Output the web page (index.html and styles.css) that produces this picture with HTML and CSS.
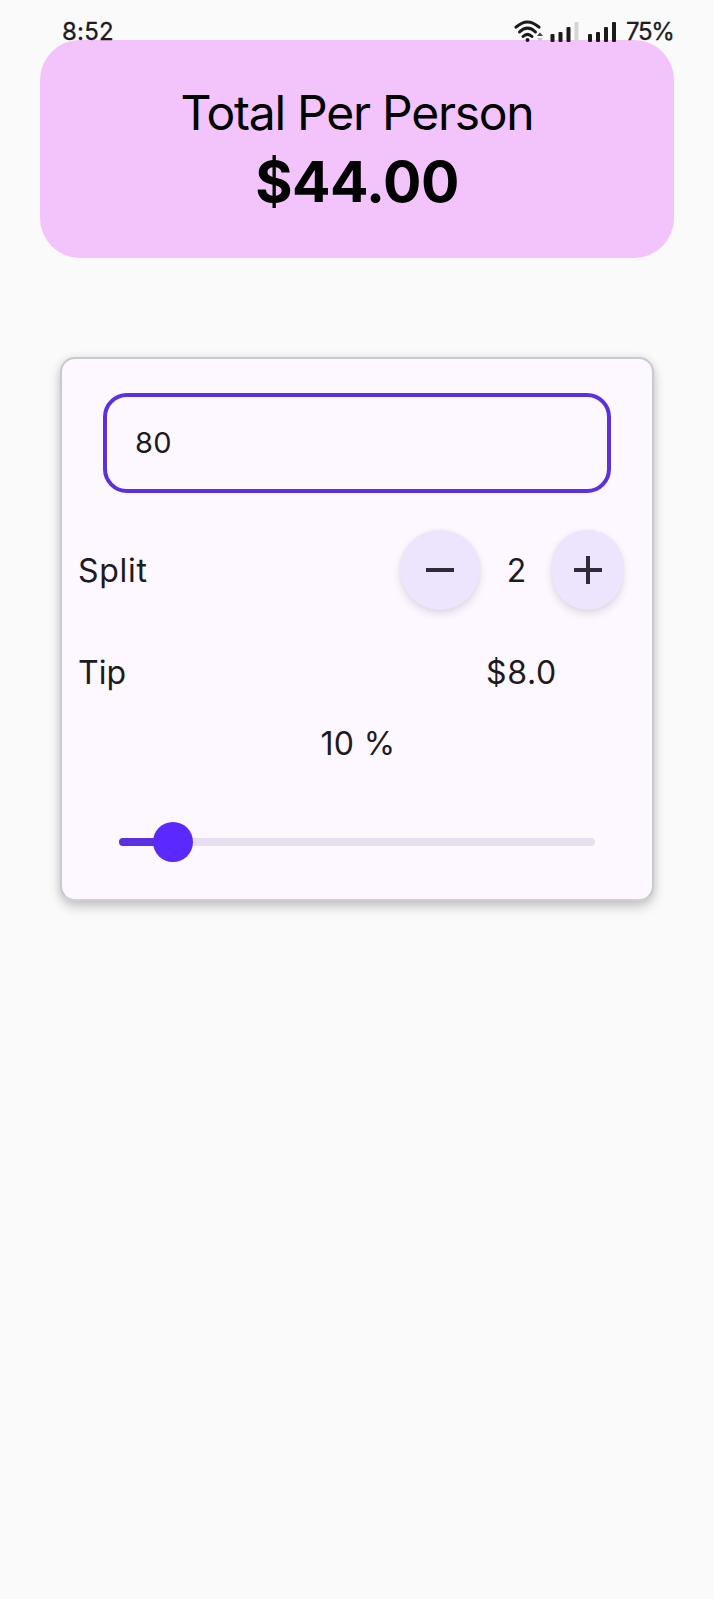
FILE: index.html
```
<!DOCTYPE html>
<html lang="en">
<head>
<meta charset="utf-8">
<title>Tip Calculator</title>
<link rel="stylesheet" href="styles.css">
</head>
<body>
<header class="status">
  <span class="clock">8:52</span>
  <div class="indicators">
    <svg class="signals" width="104" height="24" viewBox="0 0 104 24">
      <g fill="none" stroke="#1c1b1c" stroke-width="3" stroke-linecap="round">
        <path d="M3 7.2Q14.5-3.2 26 7.2"/>
        <path d="M6.5 12Q14.5 4.2 22.5 12"/>
        <path d="M10 16.5Q14.5 12.2 19 16.5"/>
      </g>
      <circle cx="14.5" cy="20" r="2" fill="#1c1b1c"/>
      <path d="M24 16l3-3.4 3 3.4z" fill="#444"/>
      <path d="M24 18h6l-3 3.4z" fill="#c9c4cb"/>
      <g fill="#1c1b1c">
        <rect x="37.5" y="14" width="4" height="8" rx="1"/>
        <rect x="45.5" y="12" width="4" height="10" rx="1"/>
        <rect x="53.5" y="7" width="4" height="15" rx="1"/>
        <rect x="75" y="14" width="4" height="8" rx="1"/>
        <rect x="83" y="12" width="4" height="10" rx="1"/>
        <rect x="91" y="7" width="4" height="15" rx="1"/>
        <rect x="99" y="2" width="4" height="20" rx="1"/>
      </g>
      <rect x="61.5" y="2" width="4" height="20" rx="1" fill="#d6d5d6"/>
    </svg>
    <span class="battery">75%</span>
  </div>
</header>
<main>
  <section class="banner">
    <div class="title">Total Per Person</div>
    <div class="amount">$44.00</div>
  </section>
  <section class="card">
    <div class="bill"><span class="bill-value">80</span></div>
    <div class="row split">
      <span class="label split-label">Split</span>
      <div class="stepper">
        <button class="round" aria-label="Decrease"><svg width="28" height="28"><path d="M0 14h28" stroke="#322a38" stroke-width="4"/></svg></button>
        <span class="count">2</span>
        <button class="round narrow" aria-label="Increase"><svg width="28" height="28"><path d="M0 14h28M14 0v28" stroke="#322a38" stroke-width="4"/></svg></button>
      </div>
    </div>
    <div class="row tip">
      <span class="label tip-label">Tip</span>
      <span class="tip-value">$8.0</span>
    </div>
    <div class="percent">10 %</div>
    <div class="slider">
      <div class="filled"></div>
      <div class="thumb"></div>
      <div class="rest"></div>
    </div>
  </section>
</main>
</body>
</html>
```
FILE: styles.css
```
* { box-sizing: border-box; }
body {
  margin: 0;
  min-height: 1599px;
  background: #fafafa;
  color: #1d1a20;
  font-family: Inter, Roboto, sans-serif;
}
.status {
  position: relative;
  z-index: 1;
  display: flex;
  justify-content: space-between;
  height: 40px;
  padding: 17px 40px 0 62px;
  font-size: 24px;
  line-height: 30px;
}
.clock { letter-spacing: 0.2px; -webkit-text-stroke: 0.3px; }
.indicators { display: flex; gap: 9px; }
.signals { margin-top: 3px; }
.battery { width: 48px; letter-spacing: -1.3px; white-space: nowrap; -webkit-text-stroke: 0.3px; }
.banner {
  height: 218px;
  margin: 0 40px;
  padding-top: 42px;
  border-radius: 40px;
  background: #f2c4fb;
  color: #000;
  text-align: center;
}
.title { font-size: 48px; line-height: 62px; letter-spacing: -1.25px; }
.amount { font-size: 57px; line-height: 75px; font-weight: 700; letter-spacing: -0.5px; }
.card {
  height: 544px;
  margin: 99px 60px 0;
  padding: 34px 17px 0;
  border: 2px solid #cbc8ce;
  border-bottom-color: #d3d0d6;
  border-radius: 15px;
  background: #fdf8ff;
  box-shadow: 0 6px 12px rgba(0, 0, 0, .2), 0 0 8px rgba(0, 0, 0, .08);
  font-size: 32px;
  line-height: 40px;
}
.bill {
  display: flex;
  align-items: center;
  height: 100px;
  margin: 0 24px;
  padding-left: 28px;
  border: 4px solid #5a30df;
  border-radius: 24px;
  font-size: 29px;
}
.bill-value { letter-spacing: 0.2px; }
.row { display: flex; align-items: center; justify-content: space-between; }
.label { margin-left: -1px; padding-top: 2px; }
.split-label { letter-spacing: 0.7px; }
.split { height: 80px; margin-top: 37px; padding-right: 12px; }
.stepper { display: flex; align-items: center; }
.round {
  display: grid;
  place-items: center;
  width: 80px;
  height: 80px;
  padding: 0;
  border: 0;
  border-radius: 40px;
  background: #ede5fe;
  box-shadow: 0 4px 8px rgba(0, 0, 0, .12), 0 0 3px rgba(0, 0, 0, .05);
}
.narrow { width: 71px; }
.count { width: 72px; padding: 2px 0 0 1px; text-align: center; }
.tip { height: 40px; margin-top: 42px; padding-right: 78px; }
.tip-value { padding-top: 2px; letter-spacing: 0.7px; }
.percent { margin-top: 32px; padding-left: 2px; text-align: center; letter-spacing: 0.4px; }
.slider { display: flex; align-items: center; height: 40px; margin: 58px 40px 0; }
.filled { width: 36px; height: 8px; margin-right: -2px; border-radius: 4px 0 0 4px; background: #5a30df; }
.thumb { width: 40px; height: 40px; border-radius: 50%; background: #5b29ff; }
.rest { flex: 1; height: 8px; border-radius: 0 4px 4px 0; background: #e5dff0; }
```
